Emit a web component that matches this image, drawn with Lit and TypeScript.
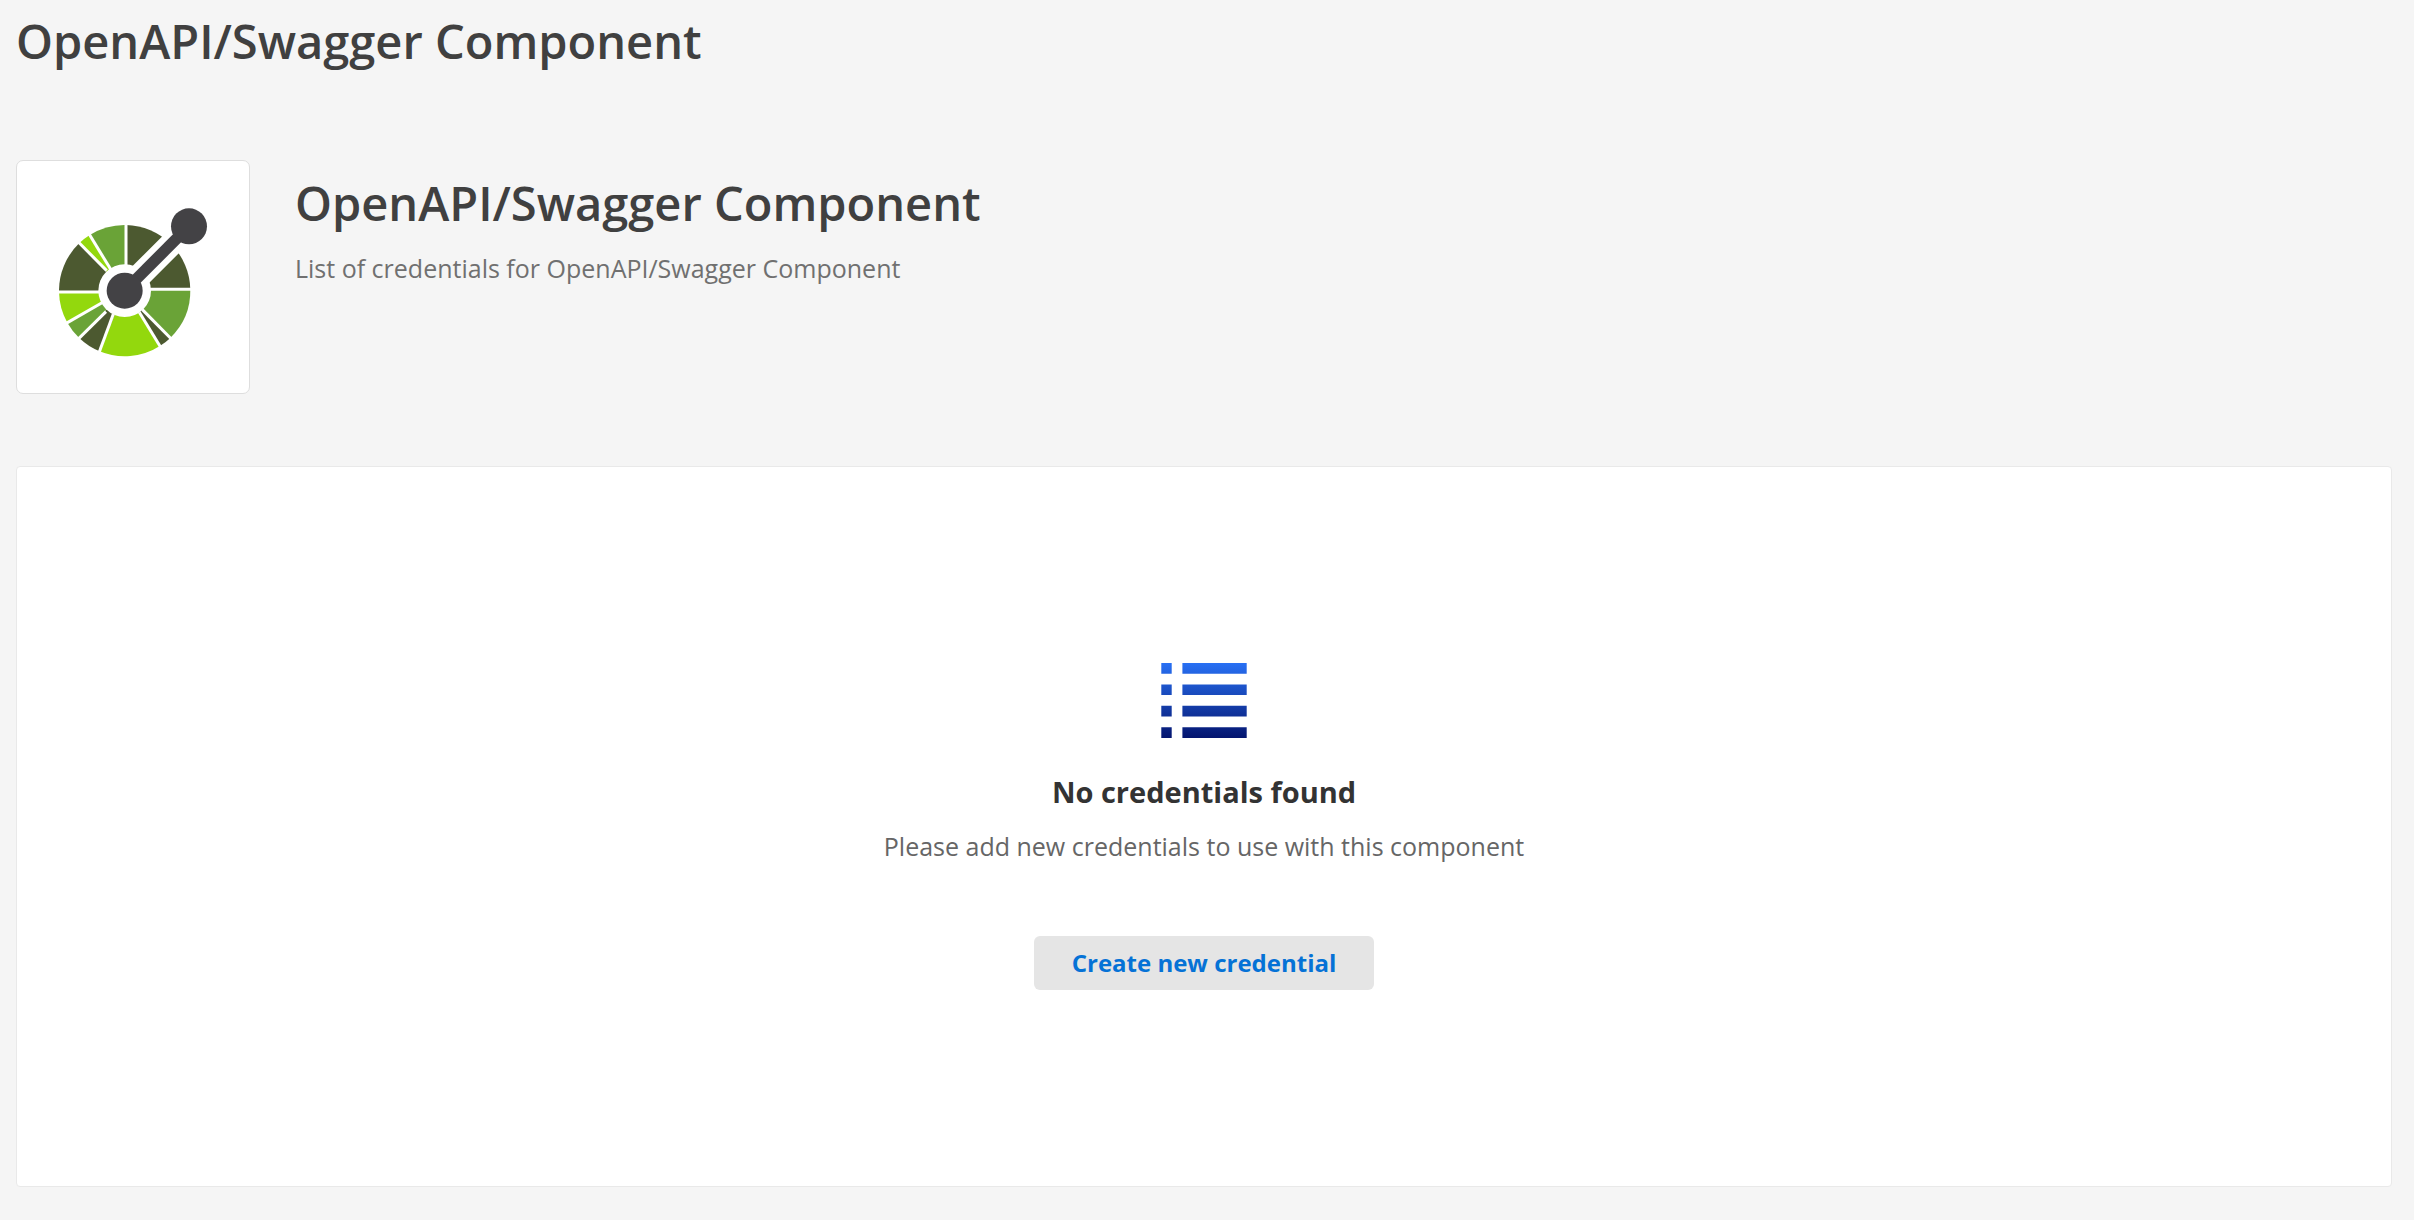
import { LitElement, html, svg, css } from "lit";
import { customElement, property } from "lit/decorators.js";

type Point = [number, number];

const DARK = "#4c5930";
const GREEN = "#6aa337";
const LIME = "#93d80d";

const HUB: Point = [224, 272];
const KNOB: Point = [417, 79];

// Dividers between the wheel segments, clockwise from the top: [rim, hub side].
const DIVIDERS: [Point, Point][] = [
  [[228, 70], [228, 200]],
  [[425, 268], [295, 268]],
  [[364, 417], [277, 329]],
  [[332, 442], [268, 337]],
  [[147, 458], [190, 342]],
  [[86, 416], [168, 335]],
  [[47, 371], [160, 306]],
  [[20, 276], [150, 276]],
  [[85, 126], [170, 212]],
  [[116, 100], [182, 208]],
];

const FILLS = [DARK, GREEN, DARK, LIME, DARK, GREEN, LIME, DARK, LIME, GREEN];

const RIM = 197;

const onRim = ([x, y]: Point): Point => {
  const dx = x - HUB[0];
  const dy = y - HUB[1];
  const length = Math.hypot(dx, dy);
  return [HUB[0] + (dx * RIM) / length, HUB[1] + (dy * RIM) / length];
};

const segment = (from: Point, to: Point) => {
  const a = onRim(from);
  const b = onRim(to);
  return `M${HUB.join(" ")}L${a.join(" ")}A${RIM} ${RIM} 0 0 1 ${b.join(" ")}Z`;
};

@customElement("openapi-logo")
export class OpenapiLogo extends LitElement {
  static styles = css`
    :host {
      display: block;
    }
    .logo {
      display: block;
      width: 100%;
    }
  `;

  render() {
    return html`
      <svg class="logo" viewBox="-99 -117 696 696" aria-hidden="true">
        ${DIVIDERS.map(
          ([rim], i) => svg`<path
            d=${segment(rim, DIVIDERS[(i + 1) % DIVIDERS.length][0])}
            fill=${FILLS[i]} />`
        )}
        <g stroke="#fff" stroke-width="9">
          ${DIVIDERS.map(
            ([a, b]) => svg`<line x1=${a[0]} y1=${a[1]} x2=${b[0]} y2=${b[1]} />`
          )}
        </g>
        <line x1=${HUB[0]} y1=${HUB[1]} x2=${KNOB[0]} y2=${KNOB[1]} stroke="#fff" stroke-width="71" />
        <circle cx=${HUB[0]} cy=${HUB[1]} r="79" fill="#fff" />
        <line x1=${HUB[0]} y1=${HUB[1]} x2=${KNOB[0]} y2=${KNOB[1]} stroke="#434245" stroke-width="34" />
        <circle cx=${HUB[0]} cy=${HUB[1]} r="54" fill="#434245" />
        <circle cx=${KNOB[0]} cy=${KNOB[1]} r="54" fill="#434245" />
      </svg>
    `;
  }
}

@customElement("empty-state")
export class EmptyState extends LitElement {
  static styles = css`
    :host {
      display: flex;
      flex-direction: column;
      align-items: center;
      text-align: center;
    }
    .icon {
      display: block;
      width: 86px;
      height: 75px;
      margin-bottom: 34px;
    }
    .title {
      margin: 0 0 16px;
      font-size: 29px;
      line-height: 40px;
      font-weight: 700;
      color: #333;
    }
    .text {
      margin: 0 0 72px;
      font-size: 25px;
      line-height: 36px;
      color: #666;
    }
    .action {
      padding: 9px 38px;
      border: 0;
      border-radius: 6px;
      background: #e5e5e5;
      color: #0572d6;
      font: inherit;
      font-size: 24px;
      line-height: 36px;
      font-weight: 700;
      cursor: pointer;
    }
    .action:hover {
      background: #dcdcdc;
    }
  `;

  render() {
    return html`
      <svg class="icon" viewBox="0 0 86 75" aria-hidden="true">
        <defs>
          <linearGradient id="fade" gradientUnits="userSpaceOnUse" x1="0" y1="0" x2="0" y2="75">
            <stop offset="0" stop-color="#2870f4" />
            <stop offset="1" stop-color="#04156f" />
          </linearGradient>
        </defs>
        <path
          fill="url(#fade)"
          d="M.3 0h10.4v10.7H.3zM21.4 0H85.7v10.7H21.4zM.3 21.4h10.4v10.7H.3zM21.4 21.4H85.7v10.7H21.4zM.3 42.8h10.4v10.7H.3zM21.4 42.8H85.7v10.7H21.4zM.3 64.3h10.4V75H.3zM21.4 64.3H85.7V75H21.4z"
        />
      </svg>
      <h3 class="title">No credentials found</h3>
      <p class="text">Please add new credentials to use with this component</p>
      <button class="action" type="button">Create new credential</button>
    `;
  }
}

@customElement("app-root")
export class AppRoot extends LitElement {
  @property() name = "OpenAPI/Swagger Component";

  static styles = css`
    :host {
      display: block;
      box-sizing: border-box;
      min-height: 100vh;
      padding: 9px 22px 32px 16px;
      background: #f5f5f5;
      font-family: "Open Sans", "Noto Sans", sans-serif;
    }
    .heading {
      margin: 0;
      font-size: 47px;
      line-height: 64px;
      font-weight: 600;
      color: #404040;
    }
    .component {
      display: flex;
      gap: 45px;
      margin: 87px 0 72px;
    }
    .tile {
      flex: none;
      width: 232px;
      border: 1px solid #dedede;
      border-radius: 7px;
      background: #fff;
      overflow: hidden;
    }
    .details {
      padding-top: 11px;
    }
    .summary {
      margin: 15px 0 0;
      font-size: 25px;
      line-height: 36px;
      color: #707070;
    }
    .panel {
      padding: 196px 24px;
      border: 1px solid #e9e9e9;
      border-radius: 4px;
      background: #fff;
    }
  `;

  render() {
    return html`
      <h1 class="heading">${this.name}</h1>
      <section class="component">
        <div class="tile"><openapi-logo></openapi-logo></div>
        <div class="details">
          <h2 class="heading">${this.name}</h2>
          <p class="summary">List of credentials for ${this.name}</p>
        </div>
      </section>
      <main class="panel"><empty-state></empty-state></main>
    `;
  }
}
